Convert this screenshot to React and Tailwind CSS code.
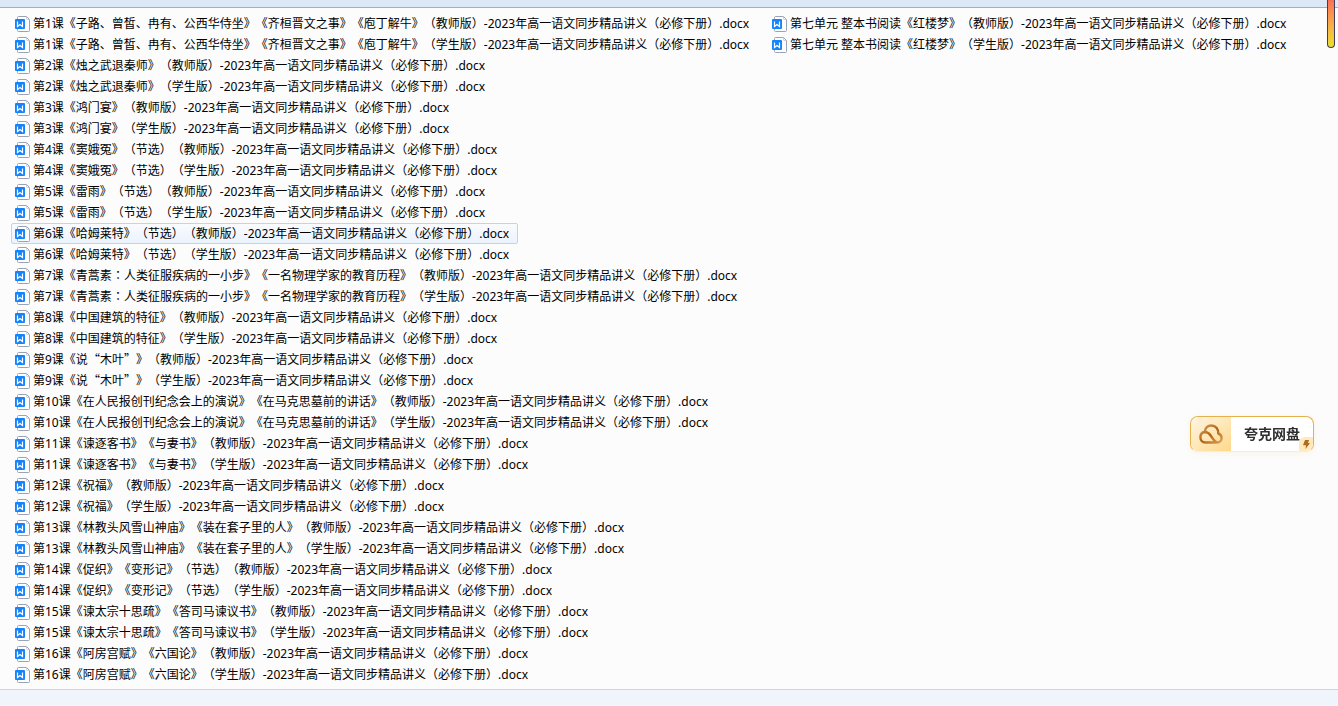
import { Fragment } from "react";
import clsx from "clsx";

const SUFFIX = "-2023年高一语文同步精品讲义（必修下册）.docx";
const EDITIONS = ["教师版", "学生版"];

const lessons = [
  "第1课《子路、曾皙、冉有、公西华侍坐》《齐桓晋文之事》《庖丁解牛》",
  "第2课《烛之武退秦师》",
  "第3课《鸿门宴》",
  "第4课《窦娥冤》（节选）",
  "第5课《雷雨》（节选）",
  "第6课《哈姆莱特》（节选）",
  "第7课《青蒿素：人类征服疾病的一小步》《一名物理学家的教育历程》",
  "第8课《中国建筑的特征》",
  "第9课《说“木叶”》",
  "第10课《在人民报创刊纪念会上的演说》《在马克思墓前的讲话》",
  "第11课《谏逐客书》《与妻书》",
  "第12课《祝福》",
  "第13课《林教头风雪山神庙》《装在套子里的人》",
  "第14课《促织》《变形记》（节选）",
  "第15课《谏太宗十思疏》《答司马谏议书》",
  "第16课《阿房宫赋》《六国论》",
  "第七单元 整本书阅读《红楼梦》",
];

const files = lessons.flatMap((title) =>
  EDITIONS.map((edition) => `${title}（${edition}）${SUFFIX}`)
);

const HOVERED = 10;

// Curly quotes must be full width and the colon centred, so these
// characters name their own CJK face
const PUNCTUATION_FONTS = {
  "“": "font-['Noto_Sans_CJK_SC',sans-serif]",
  "”": "font-['Noto_Sans_CJK_SC',sans-serif]",
  "：": "font-['Noto_Sans_CJK_JP',sans-serif]",
};

function DocIcon() {
  return (
    <svg
      width="16"
      height="16"
      viewBox="0 0 16 16"
      className="shrink-0"
      aria-hidden="true"
    >
      <path
        d="M3.5.5h8l3 3v11a1 1 0 0 1-1 1h-10a1 1 0 0 1-1-1v-13a1 1 0 0 1 1-1z"
        fill="#fff"
        stroke="#9aa3b5"
      />
      <path d="M11.5.5v2a1 1 0 0 0 1 1h2" fill="none" stroke="#c3c9d6" />
      <rect x="0" y="3" width="10" height="10" rx="1" fill="#1583fb" />
      <path
        d="M2.5 5.500v5L5 8.500l2.500 2v-5"
        fill="none"
        stroke="#fff"
        strokeWidth="1.2"
      />
    </svg>
  );
}

function FileName({ name }) {
  return (
    <span>
      {name.split(/([“”：])/).map((part, i) =>
        PUNCTUATION_FONTS[part] ? (
          <span key={i} className={PUNCTUATION_FONTS[part]}>
            {part}
          </span>
        ) : (
          <Fragment key={i}>{part}</Fragment>
        )
      )}
    </span>
  );
}

function FileItem({ name, hovered }) {
  return (
    <li className="flex">
      <a
        href="#"
        className={clsx(
          "flex h-[21px] items-center gap-0.5 rounded-xs border pl-[3px] pr-2 whitespace-nowrap",
          hovered
            ? "border-[#b8d6fb] bg-linear-to-b from-[#fafbfd] to-[#ebf3fd]"
            : "border-transparent"
        )}
      >
        <DocIcon />
        <FileName name={name} />
      </a>
    </li>
  );
}

function CloudDriveButton() {
  return (
    <button
      type="button"
      className="fixed top-[416px] right-6 flex h-9 w-[124px] overflow-hidden rounded-lg border border-[#e5b04e] border-b-[#fbeed0] bg-white shadow-[0_1px_6px_rgba(230,180,90,0.12)]"
    >
      <span className="flex h-full w-10 items-center justify-center bg-linear-to-br from-[#fff5e2] to-[#ffd88a]">
        <svg width="24" height="20" viewBox="0 0 24 20" aria-hidden="true">
          <defs>
            <linearGradient id="cloud" x1="0" y1="0" x2="1" y2="1">
              <stop offset="0" stopColor="#d9a05a" />
              <stop offset="0.5" stopColor="#b06415" />
              <stop offset="1" stopColor="#e0a050" />
            </linearGradient>
          </defs>
          <path
            d="M6.200 18.500h12c2.600 0 4.400-2 4.400-4.500 0-2.300-1.300-3.800-3.300-4.500C19.500 5 16.500 1.500 12.500 1.500c-3.700 0-6.300 2.600-6.800 6.500C3 8.300 1.400 10.500 1.400 13.200c0 3.100 1.900 5.300 4.800 5.300zM5.700 8c3 0 4.600 1.400 6.300 4 1.700 2.700 3 5 5.500 6.300"
            fill="none"
            stroke="url(#cloud)"
            strokeWidth="2.4"
            strokeLinecap="round"
            strokeLinejoin="round"
          />
        </svg>
      </span>
      <span className="flex h-full flex-1 items-center justify-center text-sm font-bold text-[#2f2f2f]">
        夸克网盘
      </span>
      <span className="absolute right-0 bottom-0 flex size-3.5 items-center justify-center rounded-tl-md bg-[#ffe9bd]">
        <svg width="7" height="9" viewBox="0 0 7 9" aria-hidden="true">
          <path d="M2 0h4L5 3h2L2.500 9l.5-3.800H0z" fill="#b0691d" />
        </svg>
      </span>
    </button>
  );
}

export default function App() {
  return (
    <div className="flex min-h-screen flex-col bg-[#f0f4fb] font-['Noto_Sans','Noto_Sans_CJK_SC',sans-serif] text-xs text-black [text-spacing-trim:space-all]">
      <header className="h-2 border-b border-[#a0afc3] bg-[#dce8f5]" />

      <main className="border-b border-[#c9d5e3] bg-[#fcfcfc] pt-[5px] pb-1 pl-[11px]">
        <ul className="grid grid-flow-col grid-cols-[757px_auto] grid-rows-[repeat(32,auto)]">
          {files.map((name, i) => (
            <FileItem key={name} name={name} hovered={i === HOVERED} />
          ))}
        </ul>
      </main>

      {/* Scroll position marker */}
      <div className="fixed top-0 right-[3px] h-12 w-2 rounded-b-full border border-t-0 border-[#3d3d5c] bg-linear-to-b from-[#fb6f55] to-[#ecdf2c]" />

      <CloudDriveButton />
    </div>
  );
}
